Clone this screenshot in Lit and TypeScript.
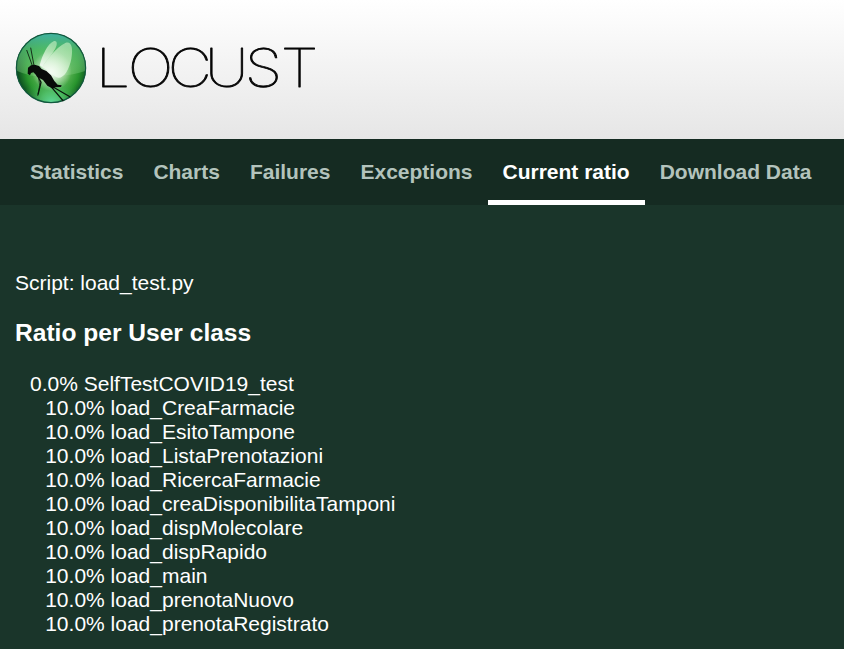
import { LitElement, html, css } from "lit";
import { customElement, property } from "lit/decorators.js";

const TABS = ["Statistics", "Charts", "Failures", "Exceptions", "Current ratio", "Download Data"];
const TASKS = [
  "load_CreaFarmacie", "load_EsitoTampone", "load_ListaPrenotazioni", "load_RicercaFarmacie",
  "load_creaDisponibilitaTamponi", "load_dispMolecolare", "load_dispRapido", "load_main",
  "load_prenotaNuovo", "load_prenotaRegistrato",
];

@customElement("locust-logo")
export class LocustLogo extends LitElement {
  static styles = css`
    :host { display: flex; align-items: center; }
    .ball { width: 72px; height: 72px; flex: none; }
    .word { width: 236px; height: 72px; flex: none; overflow: visible; }
    .letters { font: 100 53.5px Inter, "Liberation Sans", sans-serif; fill: #050505; stroke: #050505; stroke-width: 0.9; stroke-linejoin: round; vector-effect: non-scaling-stroke; }
  `;
  render() {
    return html`
      <svg class="ball" viewBox="45 36 216 216" aria-hidden="true">
        <defs>
          <radialGradient id="base" gradientUnits="userSpaceOnUse" cx="158" cy="150" r="106">
            <stop offset="0" stop-color="#a8dda0" />
            <stop offset="0.4" stop-color="#62b95a" />
            <stop offset="0.75" stop-color="#28942d" />
            <stop offset="1" stop-color="#0c4d20" />
          </radialGradient>
          <linearGradient id="sky" x1="0" y1="0" x2="0" y2="1">
            <stop offset="0" stop-color="#3fb3a8" />
            <stop offset="0.4" stop-color="#55c070" stop-opacity="0.8" />
            <stop offset="1" stop-color="#90d58e" stop-opacity="0.28" />
          </linearGradient>
          <radialGradient id="floor" gradientUnits="userSpaceOnUse" cx="155" cy="252" r="90">
            <stop offset="0" stop-color="#62dda0" />
            <stop offset="0.4" stop-color="#55c470" stop-opacity="0.85" />
            <stop offset="1" stop-color="#38a040" stop-opacity="0" />
          </radialGradient>
          <radialGradient id="glow" gradientUnits="userSpaceOnUse" cx="155" cy="153" r="60">
            <stop offset="0" stop-color="#fff" stop-opacity="1" />
            <stop offset="1" stop-color="#fff" stop-opacity="0" />
          </radialGradient>
          <linearGradient id="wing" x1="0" y1="1" x2="0.6" y2="0">
            <stop offset="0" stop-color="#fff" stop-opacity="0.85" />
            <stop offset="1" stop-color="#c8efc2" stop-opacity="0.62" />
          </linearGradient>
          <clipPath id="disc"><circle cx="153" cy="144" r="105" /></clipPath>
        </defs>
        <circle cx="153" cy="144" r="105" fill="url(#base)" />
        <g clip-path="url(#disc)">
          <path d="M45 36H261V151Q218 166 170 168Q100 177 45 150Z" fill="url(#sky)" />
          <circle cx="155" cy="240" r="92" fill="url(#floor)" />
          <circle cx="155" cy="153" r="60" fill="url(#glow)" />
        </g>
        <circle cx="153" cy="144" r="104" fill="none" stroke="#12583e" stroke-width="3.5" />
        <path d="M119 136C127 105 142 72 162 63C174 61 172 77 163 91C151 112 136 124 127 142Z" fill="url(#wing)" />
        <path d="M126 142C143 117 168 83 196 69C215 62 220 86 214 116C207 153 188 179 170 172C157 164 147 151 126 142Z" fill="url(#wing)" />
        <g fill="none" stroke="#08150b" stroke-linejoin="round">
          <path d="M97 137L80 90M102 137L92 83" stroke-width="2.5" />
          <path d="M113 168L123 187L114 224" stroke-width="4" />
          <path d="M116 174L119 196L113 228" stroke-width="2" />
          <path d="M142 187L190 243M158 200L211 231" stroke-width="3.5" />
        </g>
        <path d="M84 143L93 136L104 134L117 138L125 147L139 153L153 166L163 183L173 194L185 196L183 201L166 202L159 206L142 197L129 180L111 170L106 163L100 157L93 159L90 166L83 161Z" fill="#080b09" />
      </svg>
      <svg class="word" viewBox="0 0 236 72">
        <text class="letters" transform="scale(1.14 1)" x="7.7 35.7 70.8 103.3 138.3 169.9" y="55">LOCUST</text>
      </svg>
    `;
  }
}

@customElement("tab-bar")
export class TabBar extends LitElement {
  @property() selected = "";
  static styles = css`
    :host { display: block; background: #152b22; }
    .tabs { display: flex; height: 66px; padding: 0 15px; box-sizing: border-box; }
    .tab { box-sizing: border-box; padding: 0 15px; font-size: 21px; line-height: 66px; font-weight: 700; color: #b3c3bc; white-space: nowrap; border-bottom: 5px solid transparent; }
    .active { color: #fff; border-color: #fff; }
  `;
  render() {
    return html`<nav class="tabs">${TABS.map((t) => html`<div class="tab ${t === this.selected ? "active" : ""}">${t}</div>`)}</nav>`;
  }
}

@customElement("app-root")
export class AppRoot extends LitElement {
  static styles = css`
    :host { display: block; min-height: 649px; background: #1a352a; color: #fff; font: 21px/24px "Liberation Sans", Arial, sans-serif; }
    .top { height: 139px; box-sizing: border-box; padding: 32px 15px 0; background: linear-gradient(#fff, #e6e6e6); }
    .content { padding: 66px 15px 0; }
    .script { margin: 0; }
    .title { margin: 24px 0 25px; font-size: 24.57px; line-height: 27px; padding-bottom: 1px; font-weight: 700; }
    .list { list-style: none; margin: 0; padding-left: 15px; }
    .list .list { padding-left: 15.2px; }
  `;
  render() {
    return html`
      <header class="top"><locust-logo></locust-logo></header>
      <tab-bar selected="Current ratio"></tab-bar>
      <main class="content">
        <p class="script">Script: load_test.py</p>
        <h3 class="title">Ratio per User class</h3>
        <ul class="list">
          <li>0.0% SelfTestCOVID19_test
            <ul class="list">${TASKS.map((t) => html`<li>10.0% ${t}</li>`)}</ul>
          </li>
        </ul>
      </main>
    `;
  }
}
